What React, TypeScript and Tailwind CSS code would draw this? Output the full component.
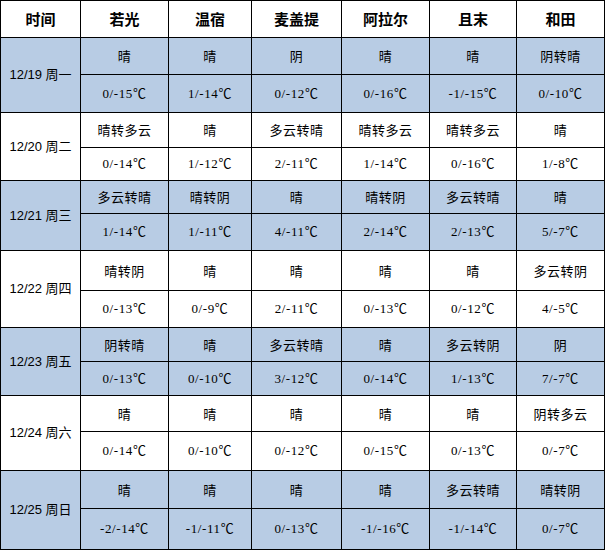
import React from "react";

const headers = ["时间", "若光", "温宿", "麦盖提", "阿拉尔", "且末", "和田"];

const rows: { date: string; weather: string[]; temp: string[]; blue: boolean }[] = [
  { date: "12/19 周一", weather: ["晴", "晴", "阴", "晴", "晴", "阴转晴"], temp: ["0/-15℃", "1/-14℃", "0/-12℃", "0/-16℃", "-1/-15℃", "0/-10℃"], blue: true },
  { date: "12/20 周二", weather: ["晴转多云", "晴", "多云转晴", "晴转多云", "晴转多云", "晴"], temp: ["0/-14℃", "1/-12℃", "2/-11℃", "1/-14℃", "0/-16℃", "1/-8℃"], blue: false },
  { date: "12/21 周三", weather: ["多云转晴", "晴转阴", "晴", "晴转阴", "多云转晴", "晴"], temp: ["1/-14℃", "1/-11℃", "4/-11℃", "2/-14℃", "2/-13℃", "5/-7℃"], blue: true },
  { date: "12/22 周四", weather: ["晴转阴", "晴", "晴", "晴", "晴", "多云转阴"], temp: ["0/-13℃", "0/-9℃", "2/-11℃", "0/-13℃", "0/-12℃", "4/-5℃"], blue: false },
  { date: "12/23 周五", weather: ["阴转晴", "晴", "多云转晴", "晴", "多云转阴", "阴"], temp: ["0/-13℃", "0/-10℃", "3/-12℃", "0/-14℃", "1/-13℃", "7/-7℃"], blue: true },
  { date: "12/24 周六", weather: ["晴", "晴", "晴", "晴", "晴", "阴转多云"], temp: ["0/-14℃", "0/-10℃", "0/-12℃", "0/-15℃", "0/-13℃", "0/-7℃"], blue: false },
  { date: "12/25 周日", weather: ["晴", "晴", "晴", "晴", "多云转晴", "晴转阴"], temp: ["-2/-14℃", "-1/-11℃", "0/-13℃", "-1/-16℃", "-1/-14℃", "0/-7℃"], blue: true },
];

const cjk = "font-['Noto_Sans_CJK_SC',sans-serif]";
const label = "font-['Liberation_Sans','Noto_Sans_CJK_SC',sans-serif]";
const num = "font-['Liberation_Serif','Noto_Sans_CJK_SC',serif]";

export default function App() {
  return (
    <div className="w-[607px] h-[552px] bg-white">
      <div className="grid w-fit bg-black gap-px p-px grid-cols-[79px_87px_82px_89px_87px_86px_87px] grid-rows-[36px_36px_37px_34px_32px_32px_36px_39px_36px_33px_33px_35px_38px_37px_40px] text-black">
        {headers.map((h) => (
          <div key={h} className={`bg-white flex items-center justify-center text-[15px] font-bold ${cjk}`}>
            {h}
          </div>
        ))}
        {rows.map((r) => {
          const bg = r.blue ? "bg-[#b8cce4]" : "bg-white";
          return (
            <React.Fragment key={r.date}>
              <div className={`${bg} row-span-2 flex items-center justify-center text-[13px] ${label}`}>{r.date}</div>
              {r.weather.map((w, i) => (
                <div key={"w" + i} className={`${bg} flex items-center justify-center text-[13px] tracking-[0.5px] ${cjk}`}>
                  {w}
                </div>
              ))}
              {r.temp.map((t, i) => (
                <div key={"t" + i} className={`${bg} flex items-center justify-center text-[13px] tracking-[0.6px] ${num}`}>
                  {t}
                </div>
              ))}
            </React.Fragment>
          );
        })}
      </div>
    </div>
  );
}
